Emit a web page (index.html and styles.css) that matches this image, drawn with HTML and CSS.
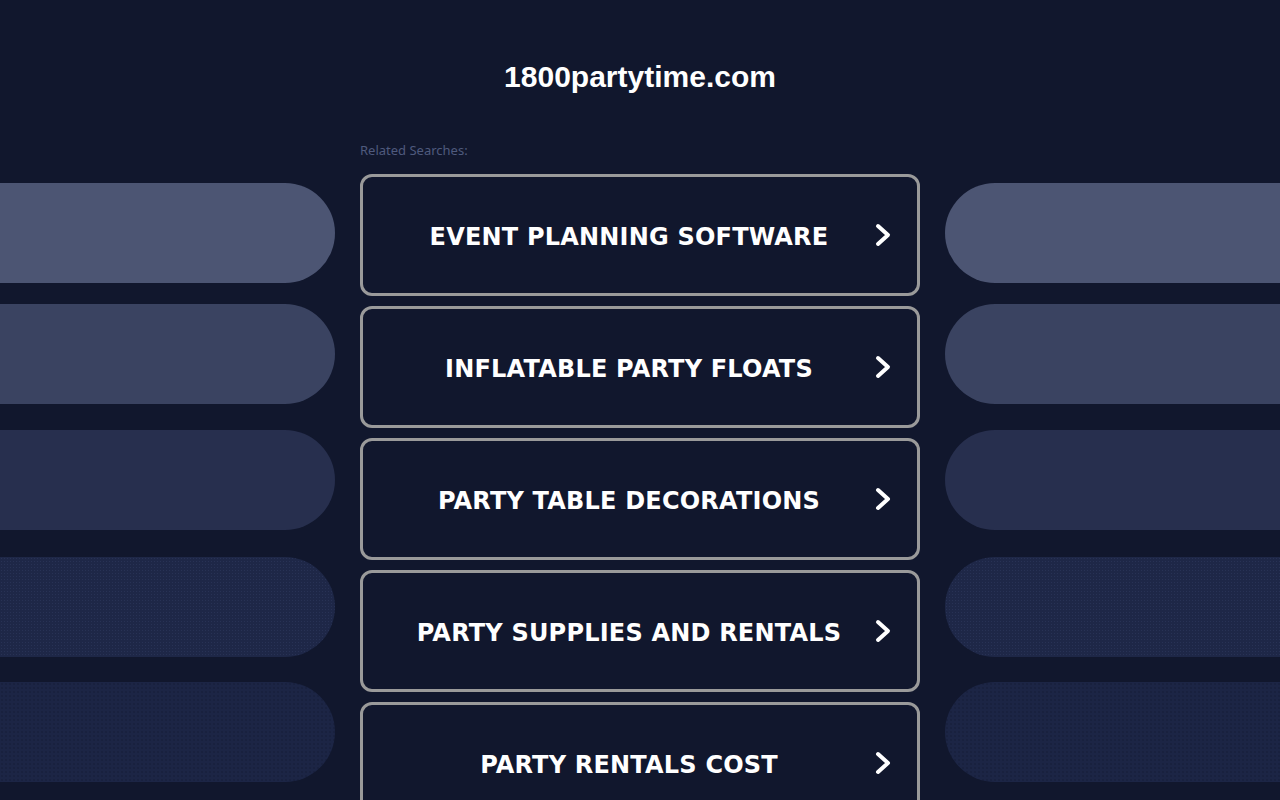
FILE: index.html
```html
<!DOCTYPE html>
<html lang="en">
<head>
  <meta charset="UTF-8">
  <meta name="viewport" content="width=device-width, initial-scale=1.0">
  <title>1800partytime.com</title>
  <link rel="stylesheet" href="styles.css">
</head>
<body>
  <header class="header">
    <h1 class="domain">1800partytime.com</h1>
  </header>

  <main class="layout">
    <div class="pills pills-left">
      <div class="pill p1"></div>
      <div class="pill p2"></div>
      <div class="pill p3"></div>
      <div class="pill p4"></div>
      <div class="pill p5"></div>
    </div>

    <section class="searches">
      <p class="label">Related Searches:</p>
      <a class="card" href="#">
        <span class="card-text">EVENT PLANNING SOFTWARE</span>
        <svg class="arrow" viewBox="0 0 16 24"><path d="M3 3 L13 12 L3 21"/></svg>
      </a>
      <a class="card" href="#">
        <span class="card-text">INFLATABLE PARTY FLOATS</span>
        <svg class="arrow" viewBox="0 0 16 24"><path d="M3 3 L13 12 L3 21"/></svg>
      </a>
      <a class="card" href="#">
        <span class="card-text">PARTY TABLE DECORATIONS</span>
        <svg class="arrow" viewBox="0 0 16 24"><path d="M3 3 L13 12 L3 21"/></svg>
      </a>
      <a class="card" href="#">
        <span class="card-text">PARTY SUPPLIES AND RENTALS</span>
        <svg class="arrow" viewBox="0 0 16 24"><path d="M3 3 L13 12 L3 21"/></svg>
      </a>
      <a class="card" href="#">
        <span class="card-text">PARTY RENTALS COST</span>
        <svg class="arrow" viewBox="0 0 16 24"><path d="M3 3 L13 12 L3 21"/></svg>
      </a>
    </section>

    <div class="pills pills-right">
      <div class="pill p1"></div>
      <div class="pill p2"></div>
      <div class="pill p3"></div>
      <div class="pill p4"></div>
      <div class="pill p5"></div>
    </div>
  </main>
</body>
</html>
```

FILE: styles.css
```css
html, body {
  margin: 0;
  padding: 0;
  height: 100%;
  overflow: hidden;
}
body {
  background-color: #11172d;
  font-family: "Liberation Sans", Arial, sans-serif;
}
.header {
  height: 142px;
  display: flex;
  justify-content: center;
}
.domain {
  margin: 57px 0 0;
  color: #ffffff;
  font-size: 30px;
  font-weight: bold;
  line-height: 40px;
}
.layout {
  display: grid;
  grid-template-columns: 1fr 560px 1fr;
  column-gap: 25px;
}
.pills {
  display: flex;
  flex-direction: column;
}
.pill {
  height: 100px;
}
.pills-left .pill {
  border-radius: 0 50px 50px 0;
}
.pills-right .pill {
  border-radius: 50px 0 0 50px;
}
.p1 {
  margin-top: 41px;
  background-color: #4c5573;
}
.p2 {
  margin-top: 21px;
  background-color: #3a4361;
}
.p3 {
  margin-top: 26px;
  background-color: #272f4e;
}
.p4 {
  margin-top: 27px;
  background-color: #1e2747;
  background-image: radial-gradient(#283255 0.6px, transparent 0.8px);
  background-size: 3px 3px;
}
.p5 {
  margin-top: 25px;
  background-color: #1c2545;
  background-image: radial-gradient(#151c37 0.6px, transparent 0.8px);
  background-size: 4px 4px;
}
.searches {
  display: flex;
  flex-direction: column;
  gap: 10px;
}
.label {
  margin: 0 0 6px;
  color: #4f5a7d;
  font-family: "Noto Sans", sans-serif;
  font-size: 13px;
  line-height: 16px;
}
.card {
  box-sizing: border-box;
  height: 122px;
  border: 3px solid #9a9a9a;
  border-radius: 12px;
  display: flex;
  align-items: center;
  padding: 0 26px 0 20px;
  text-decoration: none;
}
.card-text {
  flex: 1;
  padding-top: 4px;
  text-align: center;
  color: #ffffff;
  font-family: "DejaVu Sans", Verdana, sans-serif;
  font-weight: bold;
  font-size: 24px;
  letter-spacing: 0.2px;
}
.arrow {
  width: 16px;
  height: 24px;
  fill: none;
  stroke: #ffffff;
  stroke-width: 4;
  stroke-linecap: round;
  stroke-linejoin: round;
}
```
